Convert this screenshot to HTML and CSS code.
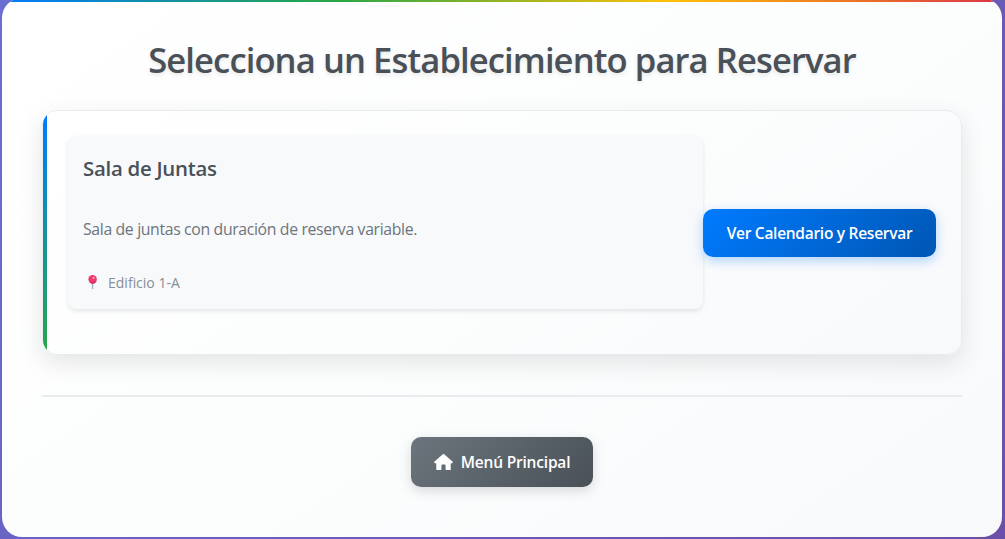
FILE: index.html
```html
<!DOCTYPE html>
<html lang="es">
<head>
<meta charset="utf-8">
<title>Reservar</title>
<link rel="stylesheet" href="styles.css">
</head>
<body>
<main class="panel">
  <h1 class="title">Selecciona un Establecimiento para Reservar</h1>
  <section class="venue">
    <div class="info">
      <h2 class="name">Sala de Juntas</h2>
      <p class="description">Sala de juntas con duración de reserva variable.</p>
      <p class="place">
        <svg class="pin" viewBox="0 0 17 16" aria-hidden="true">
          <path d="M8.900 9h1.400v5.200l-.7 1-.7-1z" fill="#a9b0c4"/>
          <circle cx="9.600" cy="5.300" r="4.200" fill="#ee3a70"/>
          <path d="M5.800 7.100a4.200 4.200 0 0 0 8-.8 5 5 0 0 1-8 .8z" fill="#c22058"/>
          <circle cx="10.600" cy="3.900" r="1.200" fill="#ff8fae"/>
        </svg>
        <span>Edificio 1-A</span>
      </p>
    </div>
    <a class="button primary">Ver Calendario y Reservar</a>
  </section>
  <footer class="footer">
    <a class="button secondary">
      <svg class="home" viewBox="0 0 576 512" aria-hidden="true"><path fill="currentColor" d="M575.8 255.5c0 18-15 32.1-32 32.1h-32l.7 160.2V472c0 22.100-17.900 40-40 40H392c-22.100 0-40-17.900-40-40V360c0-17.700-14.300-32-32-32H256c-17.700 0-32 14.300-32 32v112c0 22.100-17.900 40-40 40H104c-22.100 0-40-17.900-40-40V287.600H32c-18 0-32-14-32-32.100c0-9 3-17 10-24L266.400 8c7-7 15-8 22-8s15 2 21 7L564.800 231.500c8 7 12 15 11 24z"/></svg>
      <span>Menú Principal</span>
    </a>
  </footer>
</main>
</body>
</html>
```
FILE: styles.css
```css
* { box-sizing: border-box; }
body {
  margin: 0;
  height: 539px;
  overflow: hidden;
  background: linear-gradient(135deg, #6a6fd2 0%, #6a4fa8 100%);
  font-family: "Segoe UI", "Open Sans", "Noto Sans", sans-serif;
}
.panel {
  position: relative;
  width: 1000px;
  height: 539px;
  margin: -2px 0 0 2px;
  padding: 40px;
  overflow: hidden;
  border-radius: 20px;
  background: linear-gradient(145deg, #ffffff, #fcfdfd 50%, #f8f9fb);
}
.panel::before {
  content: "";
  position: absolute;
  inset: 0 0 auto;
  height: 4px;
  background: linear-gradient(90deg, #007bff, #28a745, #ffc107, #dc3545);
}
h1, h2, p { margin: 0; }
.title {
  height: 72px;
  line-height: 44px;
  text-align: center;
  white-space: nowrap;
  font-size: 34.6px;
  letter-spacing: -.9px;
  font-weight: 600;
  color: #495057;
  text-shadow: 0 2px 4px rgba(0, 0, 0, .1);
}
.venue {
  position: relative;
  display: flex;
  align-items: center;
  height: 245px;
  padding: 25px;
  overflow: hidden;
  border: 1px solid #e9ecef;
  border-radius: 15px;
  background: linear-gradient(145deg, #ffffff, #fcfdfd 50%, #f8f9fb);
  box-shadow: 0 8px 25px rgba(0, 0, 0, .1);
}
.venue::before {
  content: "";
  position: absolute;
  inset: 0 auto 0 0;
  width: 4px;
  background: linear-gradient(180deg, #007bff, #28a745);
}
.info {
  flex: 1;
  height: 173px;
  margin-bottom: 20px;
  padding: 16px 15px;
  border-radius: 8px;
  background: #f8f9fb;
  box-shadow: 0 2px 4px rgba(0, 0, 0, .1);
}
.name {
  height: 61px;
  line-height: 33px;
  font-size: 20.4px;
  letter-spacing: -.27px;
  font-weight: 600;
  color: #495057;
}
.description {
  height: 57px;
  line-height: 32px;
  font-size: 15.8px;
  letter-spacing: -.35px;
  color: #6c757d;
}
.place {
  display: flex;
  align-items: center;
  gap: 8px;
  height: 24px;
  font-size: 14px;
  color: #868e96;
}
.pin { width: 17px; height: 16px; }
.button {
  display: flex;
  align-items: center;
  justify-content: center;
  border-radius: 10px;
  color: #fff;
  font-size: 15.5px;
  font-weight: 600;
  letter-spacing: -.28px;
  white-space: nowrap;
}
.primary {
  width: 233px;
  height: 48px;
  background: linear-gradient(135deg, #007bff, #0056b3);
  box-shadow: 0 4px 12px rgba(0, 123, 255, .3);
}
.footer {
  display: flex;
  justify-content: center;
  margin-top: 40px;
  padding-top: 40px;
  border-top: 2px solid #e9ecef;
}
.secondary {
  gap: 8px;
  width: 182px;
  height: 50px;
  background: linear-gradient(135deg, #6c757d, #495057);
  box-shadow: 0 4px 12px rgba(73, 80, 87, .2);
  letter-spacing: -.2px;
}
.home { width: 19px; height: 16.500px; }
```
